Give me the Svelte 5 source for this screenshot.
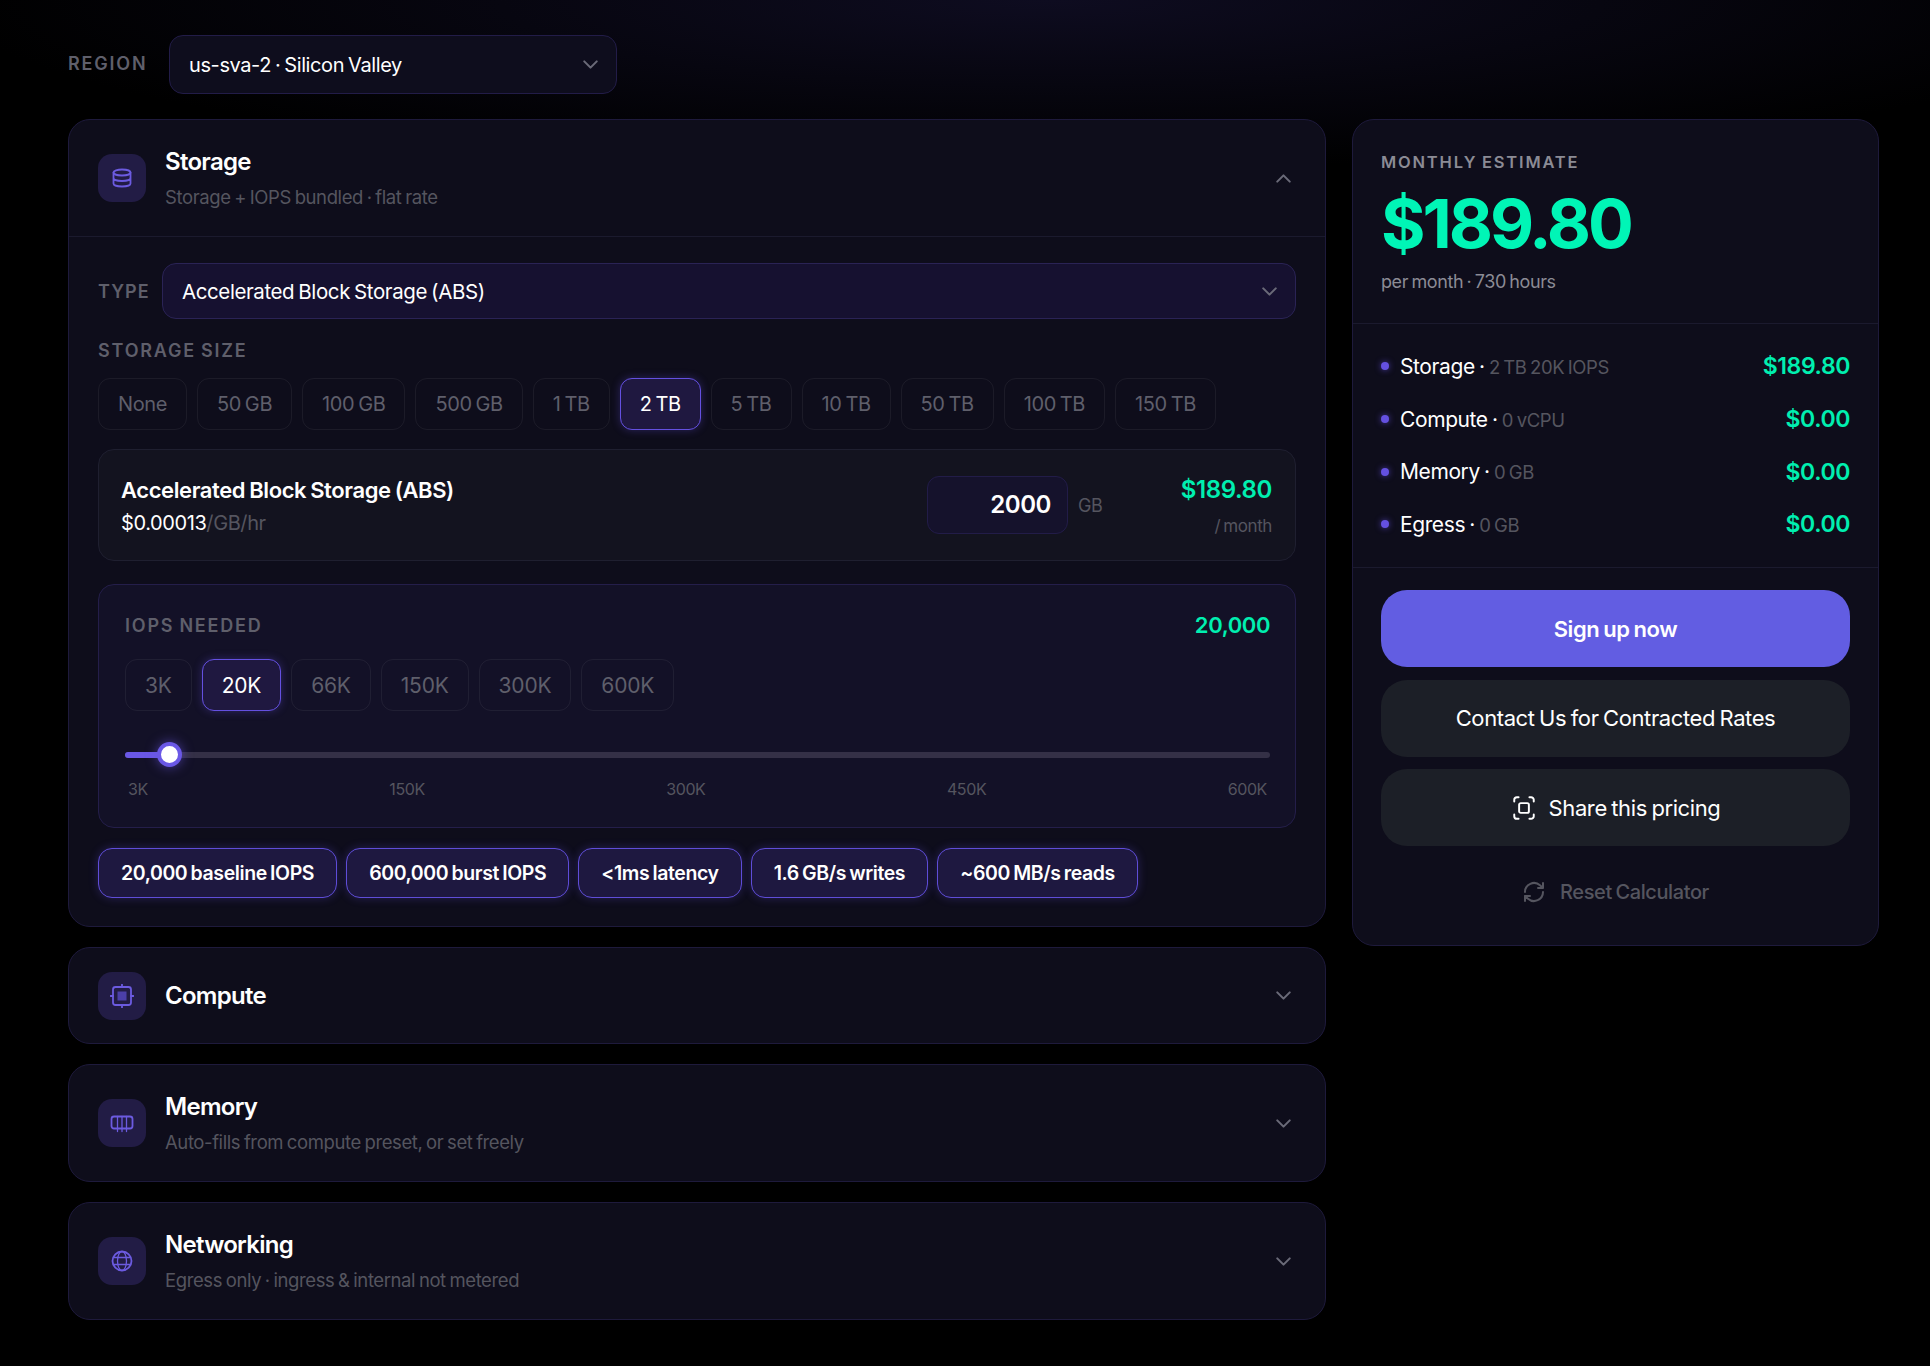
<script>
  // Cloud pricing calculator: the configurator sections on the left, estimate on the right.
  const SIZES = ["None", "50 GB", "100 GB", "500 GB", "1 TB", "2 TB", "5 TB", "10 TB", "50 TB", "100 TB", "150 TB"]
  const IOPS = ["3K", "20K", "66K", "150K", "300K", "600K"]
  const TICKS = ["3K", "150K", "300K", "450K", "600K"]
  const SPECS = ["20,000 baseline IOPS", "600,000 burst IOPS", "<1ms latency", "1.6 GB/s writes", "~600 MB/s reads"]
  const LINES = [
    { name: "Storage", detail: "2 TB 20K IOPS", price: "$189.80" },
    { name: "Compute", detail: "0 vCPU", price: "$0.00" },
    { name: "Memory", detail: "0 GB", price: "$0.00" },
    { name: "Egress", detail: "0 GB", price: "$0.00" }
  ]

  let size = $state("2 TB")
  let iops = $state("20K")
</script>

{#snippet chevron(up = false)}
  <svg class="chev" class:chev--up={up} viewBox="0 0 24 24" fill="none" stroke="currentColor" stroke-width="2" stroke-linecap="round" stroke-linejoin="round"><path d="M6 9l6 6 6-6" /></svg>
{/snippet}

<div class="page">
  <div class="region">
    <span class="caps region__label">Region</span>
    <button type="button" class="select select--region">
      <span>us-sva-2 · Silicon Valley</span>
      {@render chevron()}
    </button>
  </div>

  <div class="layout">
    <div class="sections">
      <section class="card">
        <header class="head head--open">
          <span class="icon">
            <svg viewBox="0 0 24 24"><ellipse cx="12" cy="6.500" rx="8.500" ry="3" /><path d="M3.500 6.500v11c0 1.700 3.800 3 8.500 3s8.500-1.300 8.500-3v-11M3.500 12c0 1.700 3.800 3 8.500 3s8.500-1.300 8.500-3" /></svg>
          </span>
          <div class="head__text">
            <h2>Storage</h2>
            <p>Storage + IOPS bundled · flat rate</p>
          </div>
          {@render chevron(true)}
        </header>

        <div class="body">
          <div class="type">
            <span class="caps type__label">Type</span>
            <button type="button" class="select select--type">
              <span>Accelerated Block Storage (ABS)</span>
              {@render chevron()}
            </button>
          </div>

          <div class="caps size-label">Storage size</div>
          <div class="chips">
            {#each SIZES as s}
              <button type="button" class="chip" class:chip--on={size === s} onclick={() => (size = s)}>{s}</button>
            {/each}
          </div>

          <div class="product">
            <div class="product__info">
              <div class="product__name">Accelerated Block Storage (ABS)</div>
              <div class="product__rate"><b>$0.00013</b>/GB/hr</div>
            </div>
            <div class="qty">2000</div>
            <span class="unit">GB</span>
            <div class="product__cost">
              <div class="green">$189.80</div>
              <small>/ month</small>
            </div>
          </div>

          <div class="iops">
            <div class="iops__top">
              <span class="caps">IOPS needed</span>
              <span class="green iops__value">20,000</span>
            </div>
            <div class="chips chips--iops">
              {#each IOPS as o}
                <button type="button" class="chip" class:chip--on={iops === o} onclick={() => (iops = o)}>{o}</button>
              {/each}
            </div>
            <div class="slider">
              <div class="slider__fill"></div>
              <div class="slider__thumb"></div>
            </div>
            <div class="ticks">
              {#each TICKS as t}<span>{t}</span>{/each}
            </div>
          </div>

          <div class="specs">
            {#each SPECS as s}<span class="spec">{s}</span>{/each}
          </div>
        </div>
      </section>

      <section class="card">
        <header class="head head--compute">
          <span class="icon">
            <svg viewBox="0 0 24 24"><rect x="3" y="3" width="18" height="18" rx="2.500" /><rect x="7.500" y="7.500" width="9" height="9" class="solid" /><path d="M12 .5V3M12 21v2.500M.5 12H3M21 12h2.500" /></svg>
          </span>
          <div class="head__text"><h2>Compute</h2></div>
          {@render chevron()}
        </header>
      </section>

      <section class="card">
        <header class="head">
          <span class="icon">
            <svg viewBox="0 0 24 24"><rect x="1.500" y="5.500" width="21" height="12" rx="2.500" /><path class="thin" d="M7.500 5.500v12M12 5.500v12M16.500 5.500v12M7.500 17.500v3M12 17.500v3M16.500 17.500v3" /></svg>
          </span>
          <div class="head__text">
            <h2>Memory</h2>
            <p>Auto-fills from compute preset, or set freely</p>
          </div>
          {@render chevron()}
        </header>
      </section>

      <section class="card">
        <header class="head">
          <span class="icon">
            <svg viewBox="0 0 24 24"><circle cx="12" cy="12" r="9.500" /><ellipse class="thin" cx="12" cy="12" rx="4.500" ry="9.500" /><path class="thin" d="M3.500 8.500h17M3.500 15.500h17" /></svg>
          </span>
          <div class="head__text">
            <h2>Networking</h2>
            <p>Egress only · ingress & internal not metered</p>
          </div>
          {@render chevron()}
        </header>
      </section>
    </div>

    <aside class="summary">
      <div class="total">
        <div class="caps total__label">Monthly estimate</div>
        <div class="total__price">$189.80</div>
        <div class="total__note">per month · 730 hours</div>
      </div>

      <ul class="lines">
        {#each LINES as l}
          <li>
            <span class="dot"></span>
            <span class="lines__name">{l.name} <i>·</i> <em>{l.detail}</em></span>
            <span class="green lines__price">{l.price}</span>
          </li>
        {/each}
      </ul>

      <div class="actions">
        <button type="button" class="btn btn--primary">Sign up now</button>
        <button type="button" class="btn">Contact Us for Contracted Rates</button>
        <button type="button" class="btn">
          <svg viewBox="0 0 24 24" fill="none" stroke="currentColor" stroke-width="1.800" stroke-linecap="round" stroke-linejoin="round"><path d="M3 6V4.500A2.500 2.500 0 0 1 5.500 2H7M17 2h1.500A2.500 2.500 0 0 1 21 4.500V6M21 18v1.500a2.500 2.500 0 0 1-2.500 2.500H17M7 22H5.500A2.500 2.500 0 0 1 3 19.500V18" /><rect x="7.500" y="7.500" width="9" height="9" rx="1.500" /></svg>
          Share this pricing
        </button>
        <button type="button" class="reset">
          <svg viewBox="0 0 24 24" fill="none" stroke="currentColor" stroke-width="2" stroke-linecap="round" stroke-linejoin="round"><path d="M3 12a9 9 0 0 1 15-6.700L21 8M21 3v5h-5M21 12a9 9 0 0 1-15 6.700L3 16M3 21v-5h5" /></svg>
          Reset Calculator
        </button>
      </div>
    </aside>
  </div>
</div>

<style>
  :global(body) {
    background: #000;
    font-family: Inter, "Liberation Sans", sans-serif;
    letter-spacing: -0.025em;
    word-spacing: -0.08em;
  }

  button {
    font: inherit;
    letter-spacing: inherit;
    word-spacing: inherit;
    cursor: pointer;
  }

  .page {
    box-sizing: border-box;
    min-height: 1366px;
    padding: 35px 51px 0 68px;
    color: #fff;
    background: radial-gradient(ellipse 1100px 170px at 1050px 0, #0e0c20, transparent);
  }

  .caps {
    font-size: 18px;
    font-weight: 600;
    letter-spacing: 0.1em;
    text-transform: uppercase;
    color: #5f5f6b;
  }

  .green {
    color: #00efb0;
    font-weight: 600;
  }

  .region {
    display: flex;
    align-items: center;
    margin-bottom: 25px;
  }

  .region__label {
    flex: none;
    width: 101px;
    margin-top: -2px;
  }

  .select {
    display: flex;
    align-items: center;
    justify-content: space-between;
    box-sizing: border-box;
    padding: 0 13px 0 19px;
    font-size: 20px;
    color: #fff;
    background: #0e0d1d;
    border: 1px solid #221c48;
    border-radius: 14px;
  }

  .select--region {
    width: 448px;
    height: 59px;
  }

  .select--type {
    flex: 1;
    height: 56px;
    font-size: 20.500px;
    background: #161130;
    border-color: #2a2355;
  }

  .chev {
    width: 25px;
    height: 25px;
    flex: none;
    color: #6a6a78;
  }

  .chev--up {
    transform: rotate(180deg);
  }

  .layout {
    display: grid;
    grid-template-columns: 1258px 527px;
    gap: 26px;
    align-items: start;
  }

  .sections {
    display: flex;
    flex-direction: column;
    gap: 20px;
  }

  .card {
    background: #0e0d1b;
    border: 1px solid #1e1a3c;
    border-radius: 22px;
  }

  .head {
    display: flex;
    align-items: center;
    gap: 19px;
    height: 116px;
    padding: 0 29px;
  }

  .head--open {
    border-bottom: 1px solid #1b1a2e;
  }

  .head--compute {
    height: 95px;
  }

  .head__text {
    flex: 1;
  }

  .head h2 {
    margin: 0;
    font-size: 24px;
    font-weight: 600;
    line-height: 30px;
    letter-spacing: -0.03em;
  }

  .head p {
    margin: 8px 0 0;
    font-size: 18.500px;
    line-height: 24px;
    word-spacing: -0.06em;
    color: #55555f;
  }

  .icon {
    display: grid;
    place-items: center;
    width: 48px;
    height: 48px;
    background: #221c45;
    border-radius: 14px;
  }

  .icon svg {
    width: 24px;
    height: 24px;
    fill: none;
    stroke: #6c5be0;
    stroke-width: 1.800;
    stroke-linecap: round;
    stroke-linejoin: round;
  }

  .icon .thin {
    stroke-width: 1.300;
  }

  .icon .solid {
    fill: #4b3fa8;
    stroke: none;
  }

  .body {
    padding: 26px 29px 28px;
  }

  .type {
    display: flex;
    align-items: center;
  }

  .type__label {
    flex: none;
    width: 64px;
    letter-spacing: 0.06em;
  }

  .size-label {
    margin: 21px 0 16px;
    line-height: 22px;
  }

  .chips {
    display: flex;
    gap: 10px;
  }

  .chip {
    height: 52px;
    padding: 0 19px;
    font-size: 20px;
    color: #5f5f6b;
    background: transparent;
    border: 1px solid rgba(255, 255, 255, 0.06);
    border-radius: 12px;
  }

  .chips--iops .chip {
    font-size: 21px;
    letter-spacing: -0.01em;
  }

  .chip--on {
    color: #fff;
    background: #1f1840;
    border-color: #6450e0;
    box-shadow: 0 0 8px rgba(100, 80, 224, 0.35);
  }

  .product {
    display: flex;
    align-items: center;
    box-sizing: border-box;
    height: 112px;
    margin-top: 19px;
    padding: 0 23px 0 22px;
    background: #13131f;
    border: 1px solid #1f1f30;
    border-radius: 16px;
  }

  .product__info {
    flex: 1;
  }

  .product__name {
    font-size: 22px;
    font-weight: 600;
    line-height: 28px;
    word-spacing: -0.05em;
  }

  .product__rate {
    margin-top: 7px;
    font-size: 20px;
    line-height: 24px;
    color: #55555f;
  }

  .product__rate b {
    font-weight: 400;
    color: #fff;
  }

  .qty {
    box-sizing: border-box;
    width: 141px;
    height: 58px;
    padding-right: 16px;
    font-size: 24px;
    font-weight: 600;
    line-height: 56px;
    text-align: right;
    background: #15122c;
    border: 1px solid #221c48;
    border-radius: 12px;
  }

  .unit {
    width: 60px;
    margin-left: 10px;
    font-size: 18px;
    color: #55555f;
  }

  .product__cost {
    width: 134px;
    font-size: 24px;
    text-align: right;
  }

  .product__cost small {
    display: block;
    margin-top: 12px;
    font-size: 17px;
    color: #55555f;
  }

  .iops {
    box-sizing: border-box;
    height: 244px;
    margin-top: 23px;
    padding: 28px 25px 0 26px;
    background: #131127;
    border: 1px solid #241e4a;
    border-radius: 16px;
  }

  .iops__top {
    display: flex;
    align-items: center;
    justify-content: space-between;
    margin-bottom: 22px;
    height: 24px;
  }

  .iops__value {
    font-size: 22px;
  }

  .slider {
    position: relative;
    height: 6px;
    margin-top: 41px;
    background: #343046;
    border-radius: 3px;
  }

  .slider__fill {
    width: 44px;
    height: 100%;
    background: #6a58e6;
    border-radius: 3px;
  }

  .slider__thumb {
    position: absolute;
    top: -10px;
    left: 32px;
    box-sizing: border-box;
    width: 25px;
    height: 25px;
    background: #fff;
    border: 4px solid #6a58e6;
    border-radius: 50%;
    box-shadow: 0 0 12px rgba(106, 88, 230, 0.6);
  }

  .ticks {
    display: flex;
    justify-content: space-between;
    margin-top: 21px;
    padding: 0 3px;
    font-size: 16px;
    color: #55555f;
  }

  .specs {
    display: flex;
    gap: 9px;
    margin-top: 20px;
  }

  .spec {
    display: flex;
    align-items: center;
    height: 50px;
    padding: 0 22px;
    box-sizing: border-box;
    font-size: 19.500px;
    font-weight: 600;
    background: #1e1840;
    border: 1px solid #5f4dd8;
    border-radius: 14px;
    box-shadow: 0 0 10px rgba(100, 80, 224, 0.3);
  }

  .summary {
    background: #0e0d1b;
    border: 1px solid #1e1a3c;
    border-radius: 22px;
  }

  .total {
    height: 204px;
    box-sizing: border-box;
    padding: 31px 28px 0;
    border-bottom: 1px solid #1b1a2e;
  }

  .total__label {
    font-size: 16.500px;
    color: #8b8b95;
    letter-spacing: 0.11em;
    line-height: 22px;
  }

  .total__price {
    margin-top: 8px;
    font-size: 68px;
    font-weight: 700;
    line-height: 84px;
    letter-spacing: -0.045em;
    color: #00f5b6;
  }

  .total__note {
    margin-top: 6px;
    font-size: 18px;
    color: #8b8b95;
  }

  .lines {
    box-sizing: border-box;
    height: 244px;
    margin: 0;
    padding: 16px 28px 0;
    list-style: none;
    border-bottom: 1px solid #1b1a2e;
  }

  .lines li {
    display: flex;
    align-items: center;
    height: 52.700px;
  }

  .dot {
    width: 8px;
    height: 8px;
    margin-right: 11px;
    background: #6450e0;
    border-radius: 50%;
    box-shadow: 0 0 6px rgba(100, 80, 224, 0.7);
  }

  .lines__name {
    flex: 1;
    font-size: 21px;
  }

  .lines__name i {
    font-style: normal;
  }

  .lines__name em {
    font-size: 18.500px;
    font-style: normal;
    color: #55555f;
  }

  .lines__price {
    font-size: 23px;
  }

  .actions {
    display: flex;
    flex-direction: column;
    gap: 12.500px;
    height: 377px;
    box-sizing: border-box;
    padding: 22px 28px 0;
  }

  .btn {
    display: flex;
    align-items: center;
    justify-content: center;
    gap: 12px;
    height: 77px;
    font-size: 22px;
    color: #fff;
    background: #1c1f27;
    border: 0;
    border-radius: 26px;
  }

  .btn svg {
    width: 26px;
    height: 26px;
  }

  .btn--primary {
    font-weight: 600;
    background: #625de2;
  }

  .reset {
    display: flex;
    align-items: center;
    justify-content: center;
    gap: 14px;
    margin-top: 20px;
    font-size: 20px;
    font-weight: 500;
    color: #55555f;
    background: none;
    border: 0;
  }

  .reset svg {
    width: 24px;
    height: 24px;
  }
</style>
